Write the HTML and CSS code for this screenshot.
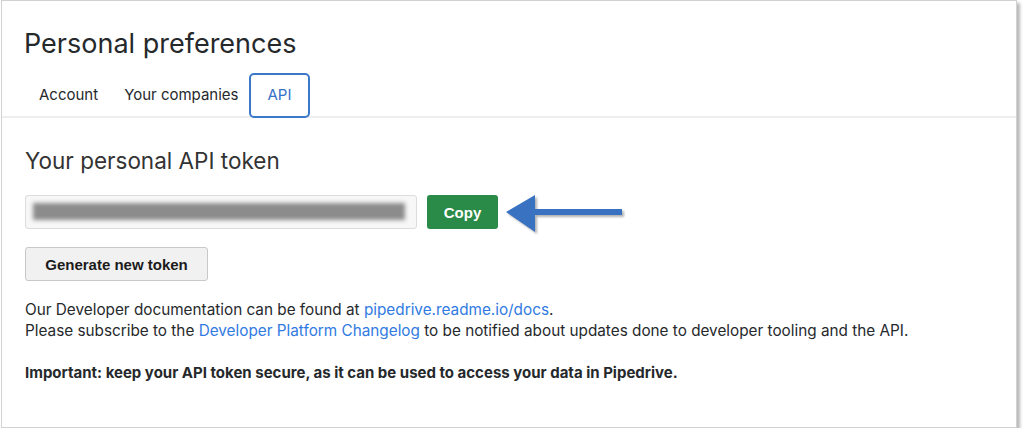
FILE: index.html
```html
<!DOCTYPE html>
<html lang="en">
<head>
  <meta charset="UTF-8" />
  <title>Personal preferences</title>
  <link rel="stylesheet" href="styles.css">
</head>
<body>
<div class="card">
  <div class="header">
    <h1>Personal preferences</h1>
    <div class="tabs">
      <span class="tab">Account</span>
      <span class="tab">Your companies</span>
      <span class="tab active">API</span>
    </div>
  </div>
  <div class="content">
    <h2>Your personal API token</h2>
    <div class="token-row">
      <div class="token"><div class="blur"></div></div>
      <button class="btn copy">Copy</button>
      <svg class="arrow" width="118" height="40" viewBox="0 0 118 40">
        <polygon points="0,17 29,0 29,14 116,14 116,20 29,20 29,37" fill="#3a72c2"/>
      </svg>
    </div>
    <button class="btn generate">Generate new token</button>
    <p class="info">
      Our Developer documentation can be found at <a href="#">pipedrive.readme.io/docs</a>.<br>
      Please subscribe to the <a href="#">Developer Platform Changelog</a> to be notified about updates done to developer tooling and the API.
    </p>
    <p class="important">Important: keep your API token secure, as it can be used to access your data in Pipedrive.</p>
  </div>
</div>
</body>
</html>
```

FILE: styles.css
```css
body {
  margin: 0;
  background: #fff;
  font-family: Inter, "Noto Sans", sans-serif;
  color: #26292c;
}
.card {
  margin-left: 1px;
  width: 1016px;
  height: 428px;
  box-sizing: border-box;
  border: 1px solid #d2d2d2;
  box-shadow: 3px 3px 3px rgba(0, 0, 0, 0.28);
  background: #fff;
}
.header {
  padding: 26px 0 0 22px;
  border-bottom: 2px solid #eeeeee;
}
h1 {
  margin: 0;
  font-size: 27px;
  font-weight: 400;
  line-height: 34px;
}
.tabs {
  display: flex;
  margin-top: 12px;
  margin-left: 2px;
  height: 43px;
  font-size: 15px;
}
.tab {
  padding: 0 13px;
  line-height: 43px;
}
.active {
  margin-left: -3px;
  padding: 0 17px;
  border: 2px solid #3b78c8;
  border-radius: 5px;
  line-height: 39px;
  color: #3670c9;
  margin-bottom: -2px;
}
.content {
  padding: 29px 0 0 23px;
}
h2 {
  margin: 0;
  font-size: 22.5px;
  font-weight: 400;
  line-height: 28px;
  color: #333;
}
.token-row {
  display: flex;
  align-items: flex-start;
  margin-top: 20px;
  height: 34px;
}
.token {
  width: 392px;
  height: 34px;
  box-sizing: border-box;
  border: 1px solid #dcdcdc;
  border-radius: 3px;
  background: #f7f7f7;
  padding: 7px 11px 0 7px;
}
.blur {
  height: 17px;
  background: #8c8c8c;
  filter: blur(2px);
}
.btn {
  font-family: "Liberation Sans", Arial, sans-serif;
  font-weight: bold;
  font-size: 15px;
  height: 34px;
  border-radius: 3px;
  box-sizing: border-box;
}
.copy {
  margin-left: 10px;
  width: 71px;
  border: none;
  background: #2a8a47;
  color: #fff;
}
.arrow {
  margin-left: 8px;
  filter: drop-shadow(2px 2px 1px rgba(0, 0, 0, 0.3));
}
.generate {
  margin-top: 18px;
  width: 183px;
  border: 1px solid #c8c8c8;
  background: #f1f1f1;
  color: #1b1b1b;
}
.info {
  margin: 18px 0 0;
  font-size: 15.3px;
  line-height: 21px;
}
.info a {
  color: #317ae2;
  text-decoration: none;
}
.important {
  margin: 21px 0 0;
  font-size: 15px;
  font-weight: 700;
  line-height: 21px;
}
```
